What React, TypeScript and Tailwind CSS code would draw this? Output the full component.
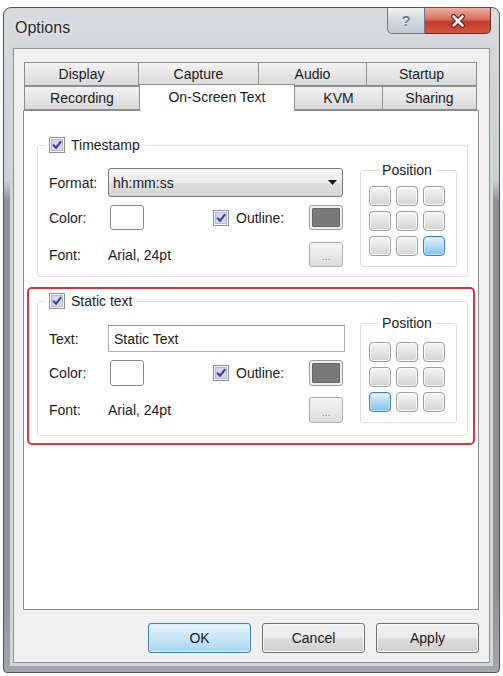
import React from "react";

const topTabs = [
    { label: "Display", w: "w-[115px]" },
    { label: "Capture", w: "w-[121px]" },
    { label: "Audio", w: "w-[109px]" },
    { label: "Startup", w: "w-[111px]" },
];

const bottomTabs = [
    { label: "Recording", w: "w-[116px]", active: false },
    { label: "On-Screen Text", w: "w-[156px]", active: true },
    { label: "KVM", w: "w-[89px]", active: false },
    { label: "Sharing", w: "w-[95px]", active: false },
];

function Check() {
    return (
        <svg width="16" height="16" viewBox="0 0 16 16" className="shrink-0">
            <rect x="0.5" y="0.5" width="15" height="15" fill="#f5f5f5" stroke="#8f8f8f" />
            <rect x="2.5" y="2.5" width="11" height="11" fill="#d3d7ee" stroke="#b3b7d2" />
            <path d="M4.6 8.3 L7 10.9 L11.6 4.8" fill="none" stroke="#383d8c" strokeWidth="2" strokeLinecap="round" strokeLinejoin="round" />
        </svg>
    );
}

function PositionGrid({ selected }: { selected: number }) {
    return (
        <div className="grid grid-cols-3 gap-x-[5px] gap-y-[5px] w-[76px]">
            {Array.from({ length: 9 }).map((_, i) => (
                <div
                    key={i}
                    className={
                        i === selected
                            ? "h-[20px] rounded-[4px] border border-[#3c7fb1] bg-linear-to-b from-[#e3f3fc] to-[#7ec2ea] shadow-[inset_0_0_0_1px_#c6e6f8]"
                            : "h-[20px] rounded-[4px] border border-[#9d9d9d] bg-linear-to-b from-[#f6f6f6] to-[#d3d3d3] shadow-[inset_0_0_0_1px_#fbfbfb]"
                    }
                />
            ))}
        </div>
    );
}

function Swatch({ dark, tall }: { dark?: boolean; tall?: boolean }) {
    const h = tall ? "h-[26px]" : "h-[25px]";
    return dark ? (
        <div className={`w-[34px] ${h} rounded-[3px] border border-[#9a9a9a] bg-[#eeeeee] p-[2px]`}>
            <div className="w-full h-full rounded-[1px] bg-[#7a7a7a] border border-[#666]" />
        </div>
    ) : (
        <div className={`w-[34px] ${h} rounded-[3px] border border-[#8a8a8a] bg-white`} />
    );
}

function DotsButton({ tall }: { tall?: boolean }) {
    return (
        <div
            className={`ml-auto mr-[2px] w-[34px] ${tall ? "h-[26px]" : "h-[25px]"} rounded-[3px] border border-[#adadad] bg-linear-to-b from-[#f4f4f4] to-[#dedede] flex items-end justify-center pb-[4px] text-[11px] leading-none text-[#8a8a8a]`}
        >
            ...
        </div>
    );
}

function ColorRow({ tall }: { tall?: boolean }) {
    return (
        <div className={`flex items-center ${tall ? "h-[26px]" : "h-[25px]"}`}>
            <span className="w-[59px]">Color:</span>
            <div className="ml-[2px]">
                <Swatch tall={tall} />
            </div>
            <div className="ml-[69px] w-[96px] flex items-center gap-[7px]">
                <Check />
                <span>Outline:</span>
            </div>
            <Swatch dark tall={tall} />
        </div>
    );
}

function FontRow({ tall }: { tall?: boolean }) {
    return (
        <div className={`flex items-center ${tall ? "h-[26px]" : "h-[25px]"}`}>
            <span className="w-[59px]">Font:</span>
            <span>Arial, 24pt</span>
            <DotsButton tall={tall} />
        </div>
    );
}

export default function App() {
    return (
        <div className="w-[503px] h-[676px] bg-white overflow-hidden pt-[7px] pl-[3px] font-['Liberation_Sans',Arial,sans-serif] text-[14px] leading-[16px] text-[#1b1b1b]">
            {/* Window frame */}
            <div className="w-[497px] h-[666px] flex flex-col border border-[#4f5357] rounded-t-[8px] rounded-b-[4px] px-[9px] pb-[9px] bg-[linear-gradient(to_bottom,#d7dbdf_0%,#cbd0d5_26%,#8e9297_29%,#8e9297_88%,#a3a7ab_100%)]">
                {/* Title bar */}
                <div className="h-[40px] flex items-center shrink-0">
                    <span className="pl-[2px] text-[16px] text-[#2a2a2a] [text-shadow:0_0_6px_#ffffff]">Options</span>
                    <div className="ml-auto -mr-px self-start flex h-[26px]">
                        <div className="w-[38px] h-full rounded-bl-[5px] border border-t-0 border-[#6f7a86] bg-linear-to-b from-[#eef1f4] via-[#d3d9df] to-[#c2c9d0] flex items-center justify-center font-bold text-[15px] text-[#6a7b8d] [text-shadow:0_0_2px_#ffffff]">
                            ?
                        </div>
                        <div className="w-[66px] h-full rounded-br-[5px] border border-t-0 border-l-0 border-[#6e2b22] bg-[linear-gradient(to_bottom,#eab0a2_0%,#d8705e_45%,#c2392c_55%,#d4573f_100%)] flex items-center justify-center">
                            <svg width="16" height="14" viewBox="0 0 16 14">
                                <path d="M3.5 2.5 L12.5 11.5 M12.5 2.5 L3.5 11.5" stroke="#5c1e16" strokeWidth="5" strokeLinecap="round" />
                                <path d="M3.5 2.5 L12.5 11.5 M12.5 2.5 L3.5 11.5" stroke="#ffffff" strokeWidth="2.6" strokeLinecap="round" />
                            </svg>
                        </div>
                    </div>
                </div>

                {/* Client area */}
                <div className="flex-1 flex flex-col bg-[#f0f0f0] border border-[#8e9399] ring-[3px] ring-[#d2d6da] pt-[13px] pl-[9px] pr-[10px] pb-[9px]">
                    {/* Tabs */}
                    <div className="flex h-[24px] ml-px">
                        {topTabs.map((t, i) => (
                            <div
                                key={t.label}
                                className={`${t.w} ${i > 0 ? "-ml-px" : ""} h-full border border-[#8c8e94] bg-linear-to-b from-[#f3f3f3] to-[#d9d9d9] flex items-center justify-center`}
                            >
                                {t.label}
                            </div>
                        ))}
                    </div>
                    <div className="flex items-end h-[24px] ml-px">
                        {bottomTabs.map((t, i) =>
                            t.active ? (
                                <div
                                    key={t.label}
                                    className={`${t.w} -ml-px h-[27px] -mb-px relative z-10 border border-b-0 border-[#8c8e94] bg-white flex items-center justify-center pb-[3px]`}
                                >
                                    {t.label}
                                </div>
                            ) : (
                                <div
                                    key={t.label}
                                    className={`${t.w} ${i > 0 ? "-ml-px" : ""} h-full border border-[#8c8e94] bg-linear-to-b from-[#f3f3f3] to-[#d9d9d9] flex items-center justify-center`}
                                >
                                    {t.label}
                                </div>
                            )
                        )}
                    </div>

                    {/* Tab pane */}
                    <div className="flex-1 bg-white border border-[#898c95]">
                        {/* Timestamp group */}
                        <fieldset className="mt-[25px] ml-[13px] mr-[10px] rounded-[3px] border border-[#d5dfe5] pl-[11px] pr-[10px] pb-[9px]">
                            <legend className="-ml-[4px] px-[4px]">
                                <span className="flex items-center gap-[6px] h-[18px]">
                                    <Check />
                                    <span>Timestamp</span>
                                </span>
                            </legend>
                            <div className="flex items-start">
                                <div className="w-[296px] mt-[14px] flex flex-col">
                                    <div className="flex items-center h-[29px]">
                                        <span className="w-[59px]">Format:</span>
                                        <div className="w-[235px] h-[29px] rounded-[3px] border border-[#7a7a7a] bg-[linear-gradient(to_bottom,#f4f4f4_0%,#ececec_50%,#dfdfdf_51%,#d6d6d6_100%)] flex items-center pl-[4px] pr-[5px]">
                                            <span>hh:mm:ss</span>
                                            <svg width="9" height="5" viewBox="0 0 9 5" className="ml-auto">
                                                <path d="M0 0 H9 L4.5 5 Z" fill="#1a1a1a" />
                                            </svg>
                                        </div>
                                    </div>
                                    <div className="mt-[8px]">
                                        <ColorRow />
                                    </div>
                                    <div className="mt-[12px]">
                                        <FontRow />
                                    </div>
                                </div>
                                <fieldset className="ml-[15px] mt-[8px] w-[97px] rounded-[3px] border border-[#d5dfe5] pl-[8px] pr-[11px] pt-[8px] pb-[10px]">
                                    <legend className="mx-auto px-[3px]">Position</legend>
                                    <PositionGrid selected={8} />
                                </fieldset>
                            </div>
                        </fieldset>

                        {/* Static text group, highlighted */}
                        <div className="mt-[10px] mx-[3px] rounded-[5px] border-2 border-[#d8343a] pt-[3px] pb-[7px] pl-[8px] pr-[5px]">
                            <fieldset className="rounded-[3px] border border-[#d5dfe5] pl-[11px] pr-[10px] pb-[12px]">
                                <legend className="-ml-[4px] px-[4px]">
                                    <span className="flex items-center gap-[6px] h-[18px]">
                                        <Check />
                                        <span>Static text</span>
                                    </span>
                                </legend>
                                <div className="flex items-start">
                                    <div className="w-[296px] mt-[15px] flex flex-col">
                                        <div className="flex items-center h-[27px]">
                                            <span className="w-[59px]">Text:</span>
                                            <div className="w-[237px] h-[27px] border border-[#abadb3] border-t-[#8e9296] bg-white flex items-center pl-[5px]">
                                                Static Text
                                            </div>
                                        </div>
                                        <div className="mt-[8px]">
                                            <ColorRow tall />
                                        </div>
                                        <div className="mt-[11px]">
                                            <FontRow tall />
                                        </div>
                                    </div>
                                    <fieldset className="ml-[15px] mt-[5px] w-[97px] rounded-[3px] border border-[#d5dfe5] pl-[8px] pr-[11px] pt-[11px] pb-[10px]">
                                        <legend className="mx-auto px-[3px]">Position</legend>
                                        <PositionGrid selected={6} />
                                    </fieldset>
                                </div>
                            </fieldset>
                        </div>
                    </div>

                    {/* Dialog buttons */}
                    <div className="mt-[13px] flex justify-end gap-[11px]">
                        <button className="w-[103px] h-[30px] rounded-[3px] border border-[#3c7fb1] bg-linear-to-b from-[#e6f4fc] to-[#aad6f1] shadow-[inset_0_0_0_1px_#d8eefb]">
                            OK
                        </button>
                        <button className="w-[103px] h-[30px] rounded-[3px] border border-[#707070] bg-[linear-gradient(to_bottom,#f2f2f2_0%,#ebebeb_50%,#dddddd_51%,#cfcfcf_100%)] shadow-[inset_0_0_0_1px_#f8f8f8]">
                            Cancel
                        </button>
                        <button className="w-[103px] h-[30px] rounded-[3px] border border-[#707070] bg-[linear-gradient(to_bottom,#f2f2f2_0%,#ebebeb_50%,#dddddd_51%,#cfcfcf_100%)] shadow-[inset_0_0_0_1px_#f8f8f8]">
                            Apply
                        </button>
                    </div>
                </div>
            </div>
        </div>
    );
}
